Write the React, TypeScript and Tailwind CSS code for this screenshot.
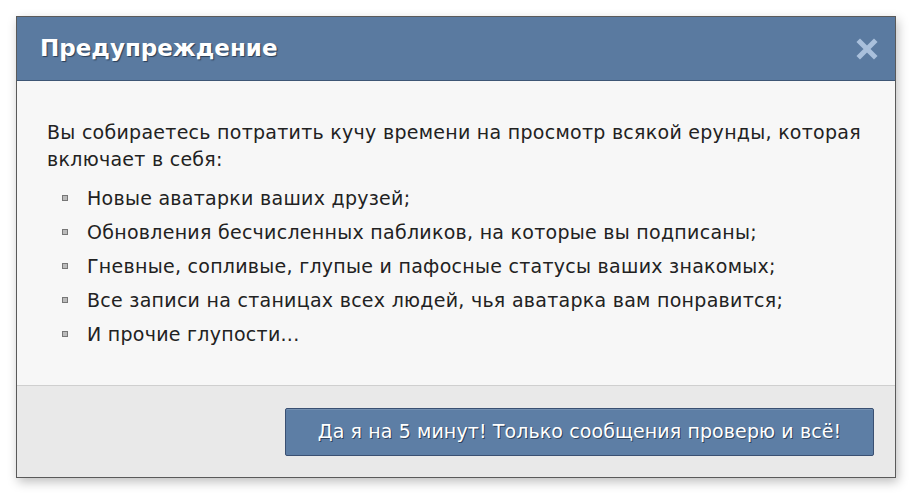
import React from "react";

const ITEMS = [
  "Новые аватарки ваших друзей;",
  "Обновления бесчисленных пабликов, на которые вы подписаны;",
  "Гневные, сопливые, глупые и пафосные статусы ваших знакомых;",
  "Все записи на станицах всех людей, чья аватарка вам понравится;",
  "И прочие глупости...",
];

export default function App() {
  return (
    <div
      className="w-[914px] h-[496px] bg-white pt-[16px] pl-[16px]"
      style={{ fontFamily: '"DejaVu Sans", Tahoma, sans-serif' }}
    >
      <div className="w-[880px] h-[462px] flex flex-col border border-[#5a5a5a] shadow-[2px_4px_10px_rgba(0,0,0,0.25)] bg-[#f7f7f7]">
        {/* header */}
        <div className="h-[64px] flex items-center justify-between bg-[#5a7aa0] border-b border-[#3e5675] pl-[23px] pr-[17px]">
          <span className="text-[23px] font-bold text-white tracking-[0px] [text-shadow:1px_1px_1px_#2a3d55]">
            Предупреждение
          </span>
          <svg width="22" height="22" viewBox="0 0 22 22">
            <path d="M4 4 L18 18 M18 4 L4 18" stroke="#a9c0dc" strokeWidth="5" strokeLinecap="square" />
          </svg>
        </div>

        {/* body */}
        <div className="flex-1 pl-[30px] pr-[10px] pt-[38px] text-[#222] text-[19px] tracking-[0.27px]">
          <p className="leading-[27px]">
            Вы собираетесь потратить кучу времени на просмотр всякой ерунды, которая включает в себя:
          </p>
          <ul className="mt-[8px] pl-[15px]">
            {ITEMS.map((t) => (
              <li key={t} className="flex items-center h-[34px]">
                <span className="w-[6px] h-[6px] border border-[#777] bg-[#bbb] mr-[19px] shrink-0" />
                {t}
              </li>
            ))}
          </ul>
        </div>

        {/* footer */}
        <div className="h-[92px] bg-[#e9e9e9] border-t border-[#cfcfcf] flex items-center justify-end pr-[21px]">
          <button className="w-[589px] h-[48px] bg-[#5d7ea5] border border-[#3a5072] rounded-[2px] text-white text-[19px] tracking-[0.1px] [text-shadow:1px_1px_0_#2f4560] shadow-[inset_0_1px_0_rgba(255,255,255,0.15)]">
            Да я на 5 минут! Только сообщения проверю и всё!
          </button>
        </div>
      </div>
    </div>
  );
}
